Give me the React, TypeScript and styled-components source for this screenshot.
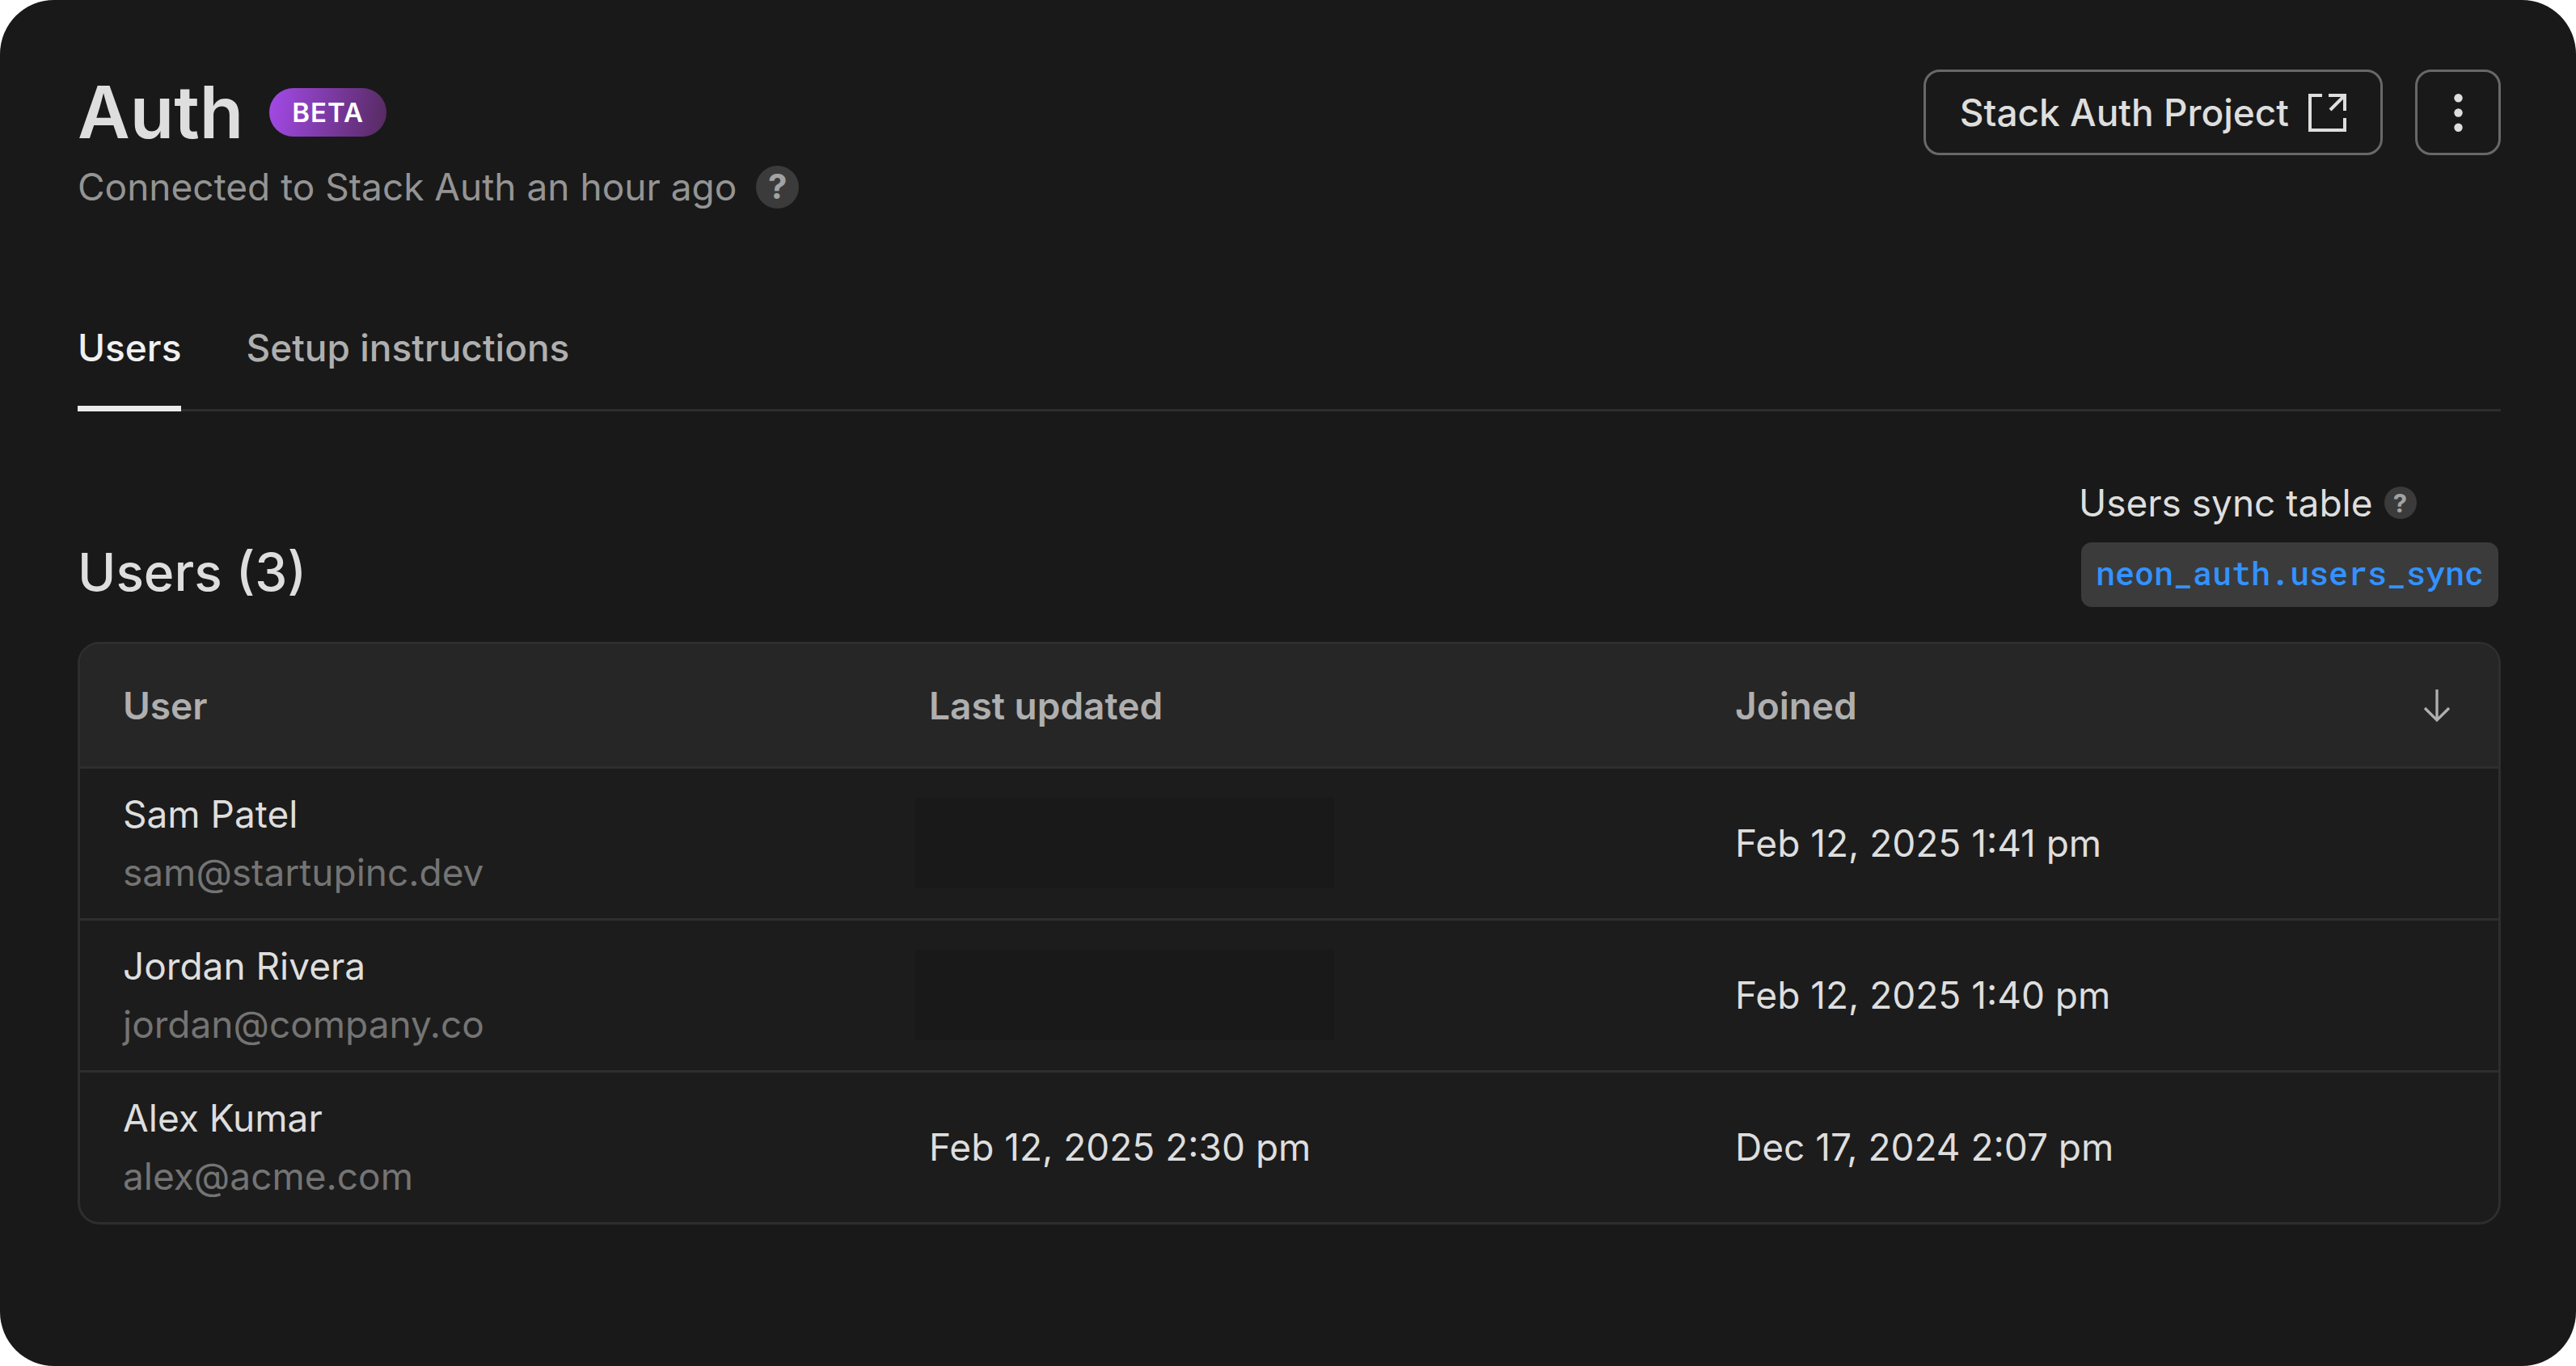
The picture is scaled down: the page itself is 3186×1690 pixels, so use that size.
import React from 'react';
import styled, { createGlobalStyle } from 'styled-components';

const GlobalStyle = createGlobalStyle`
  *, *::before, *::after { box-sizing: border-box; }
  body {
    margin: 0;
    background: #ffffff;
    font-family: Inter, "Liberation Sans", sans-serif;
    font-size: 46px;
    line-height: 72px;
    color: #dedede;
  }
  button { font: inherit; cursor: pointer; }
`;

const Page = styled.main`
  display: flex;
  flex-direction: column;
  min-height: 100vh;
  padding: 86px 93px 96px 96px;
  background: #191919;
  border-radius: 67px;
`;

const Header = styled.header`
  display: flex;
  justify-content: space-between;
  align-items: flex-start;
`;

const TitleRow = styled.div`
  display: flex;
  align-items: center;
  gap: 32px;
`;

const Title = styled.h1`
  margin: 0;
  font-size: 89px;
  font-weight: 600;
  line-height: 106px;
`;

const Badge = styled.span`
  padding: 0 28px;
  border-radius: 30px;
  background: linear-gradient(100deg, #a34ae8, #552a5f);
  color: #ffffff;
  font-size: 33px;
  font-weight: 600;
  line-height: 60px;
  letter-spacing: 1px;
`;

const Subtitle = styled.p`
  display: flex;
  align-items: center;
  gap: 24px;
  margin: 3px 0 0;
  color: #949494;
`;

const HelpButton = styled.button<{ $size: number; $text: number }>`
  display: flex;
  align-items: center;
  justify-content: center;
  width: ${(p) => p.$size}px;
  height: ${(p) => p.$size}px;
  padding: 0;
  border: 0;
  border-radius: 50%;
  background: #3b3b3b;
  color: #a3a3a3;
  font-size: ${(p) => p.$text}px;
  font-weight: 700;
  line-height: 1;
`;

const Actions = styled.div`
  display: flex;
  gap: 40px;
`;

const ProjectLink = styled.a`
  display: flex;
  align-items: center;
  gap: 24px;
  height: 106px;
  padding: 0 42px;
  border: 3px solid #686868;
  border-radius: 20px;
  color: #dedede;
  font-weight: 500;
  text-decoration: none;
`;

const MenuButton = styled.button`
  display: flex;
  align-items: center;
  justify-content: center;
  width: 106px;
  height: 106px;
  padding: 0;
  border: 3px solid #686868;
  border-radius: 20px;
  background: transparent;
  color: #dedede;
`;

const Tabs = styled.nav`
  display: flex;
  gap: 80px;
  margin-top: 127px;
  box-shadow: inset 0 -3px #2e2e2e;
`;

const Tab = styled.button<{ $active?: boolean }>`
  padding: 0 0 36px;
  border: 0;
  border-bottom: 7px solid ${(p) => (p.$active ? '#ebebeb' : 'transparent')};
  background: transparent;
  color: ${(p) => (p.$active ? '#f0f0f0' : '#afafaf')};
  font-weight: 500;
`;

const SectionHead = styled.div`
  display: flex;
  justify-content: space-between;
  align-items: flex-end;
  margin-top: 77px;
`;

const SectionTitle = styled.h2`
  margin: 0;
  font-size: 64px;
  font-weight: 500;
  line-height: 87px;
`;

const SyncInfo = styled.div`
  display: flex;
  flex-direction: column;
  gap: 13px;
`;

const SyncLabel = styled.div`
  display: flex;
  align-items: center;
  gap: 14px;
`;

const SyncTable = styled.a`
  margin: 0 3px;
  padding: 0 18px 4px;
  border-radius: 13px;
  background: #3b3b3b;
  color: #3392ff;
  font-family: "Roboto Mono", "DejaVu Sans Mono", "Liberation Mono", monospace;
  font-size: 40px;
  font-weight: 500;
  line-height: 76px;
  text-decoration: none;
`;

const TableFrame = styled.div`
  margin-top: 43px;
  border: 3px solid #2e2e2e;
  border-radius: 27px;
  background: #1c1c1c;
  overflow: hidden;
`;

const Table = styled.table`
  width: 100%;
  border-collapse: separate;
  border-spacing: 0;
  table-layout: fixed;
`;

const HeadCell = styled.th`
  height: 154px;
  padding: 0 53px;
  border-bottom: 3px solid #2e2e2e;
  background: #262626;
  color: #afafaf;
  font-weight: 600;
  text-align: left;
`;

const SortHeader = styled.div`
  display: flex;
  justify-content: space-between;
  align-items: center;
`;

const SortButton = styled.button`
  display: flex;
  padding: 0;
  border: 0;
  background: transparent;
  color: #afafaf;
`;

const Row = styled.tr`
  &:not(:last-child) > td { border-bottom: 3px solid #2e2e2e; }
`;

const Cell = styled.td`
  padding: 20px 53px 21px;
`;

const Email = styled.div`
  color: #747474;
`;

const HiddenDate = styled.div`
  width: 518px;
  height: 112px;
  margin-left: -17px;
  background: #191919;
`;

const ExternalIcon = () => (
  <svg width="47" height="47" viewBox="0 0 47 47" fill="none" stroke="currentColor" strokeWidth="4" aria-hidden="true">
    <path d="M17 2H2v43h43V30" />
    <path d="M25 2h20v19M45 2L27 20" />
  </svg>
);

const DotsIcon = () => (
  <svg width="47" height="47" viewBox="0 0 47 47" fill="currentColor" aria-hidden="true">
    <circle cx="23.500" cy="5.300" r="5.200" />
    <circle cx="23.500" cy="23.500" r="5.200" />
    <circle cx="23.500" cy="41.700" r="5.200" />
  </svg>
);

const ArrowDownIcon = () => (
  <svg width="46" height="46" viewBox="0 0 46 46" fill="none" stroke="currentColor" strokeWidth="3.300" aria-hidden="true">
    <path d="M23 3v38M8 26l15 15 15-15" />
  </svg>
);

const users = [
  { name: 'Sam Patel', email: 'sam@startupinc.dev', updated: null, joined: 'Feb 12, 2025 1:41 pm' },
  { name: 'Jordan Rivera', email: 'jordan@company.co', updated: null, joined: 'Feb 12, 2025 1:40 pm' },
  { name: 'Alex Kumar', email: 'alex@acme.com', updated: 'Feb 12, 2025 2:30 pm', joined: 'Dec 17, 2024 2:07 pm' },
];

export default function App() {
  return (
    <>
      <GlobalStyle />
      <Page>
        <Header>
          <div>
            <TitleRow>
              <Title>Auth</Title>
              <Badge>BETA</Badge>
            </TitleRow>
            <Subtitle>
              Connected to Stack Auth an hour ago
              <HelpButton $size={53} $text={42}>?</HelpButton>
            </Subtitle>
          </div>
          <Actions>
            <ProjectLink href="#project">
              Stack Auth Project
              <ExternalIcon />
            </ProjectLink>
            <MenuButton aria-label="More actions">
              <DotsIcon />
            </MenuButton>
          </Actions>
        </Header>

        <Tabs>
          <Tab $active>Users</Tab>
          <Tab>Setup instructions</Tab>
        </Tabs>

        <SectionHead>
          <SectionTitle>Users ({users.length})</SectionTitle>
          <SyncInfo>
            <SyncLabel>
              Users sync table
              <HelpButton $size={40} $text={31}>?</HelpButton>
            </SyncLabel>
            <SyncTable href="#users-sync">neon_auth.users_sync</SyncTable>
          </SyncInfo>
        </SectionHead>

        <TableFrame>
          <Table>
            <thead>
              <tr>
                <HeadCell scope="col">User</HeadCell>
                <HeadCell scope="col">Last updated</HeadCell>
                <HeadCell scope="col">
                  <SortHeader>
                    Joined
                    <SortButton aria-label="Sort by joined">
                      <ArrowDownIcon />
                    </SortButton>
                  </SortHeader>
                </HeadCell>
              </tr>
            </thead>
            <tbody>
              {users.map((user) => (
                <Row key={user.email}>
                  <Cell>
                    <div>{user.name}</div>
                    <Email>{user.email}</Email>
                  </Cell>
                  <Cell>{user.updated ?? <HiddenDate />}</Cell>
                  <Cell>{user.joined}</Cell>
                </Row>
              ))}
            </tbody>
          </Table>
        </TableFrame>
      </Page>
    </>
  );
}
